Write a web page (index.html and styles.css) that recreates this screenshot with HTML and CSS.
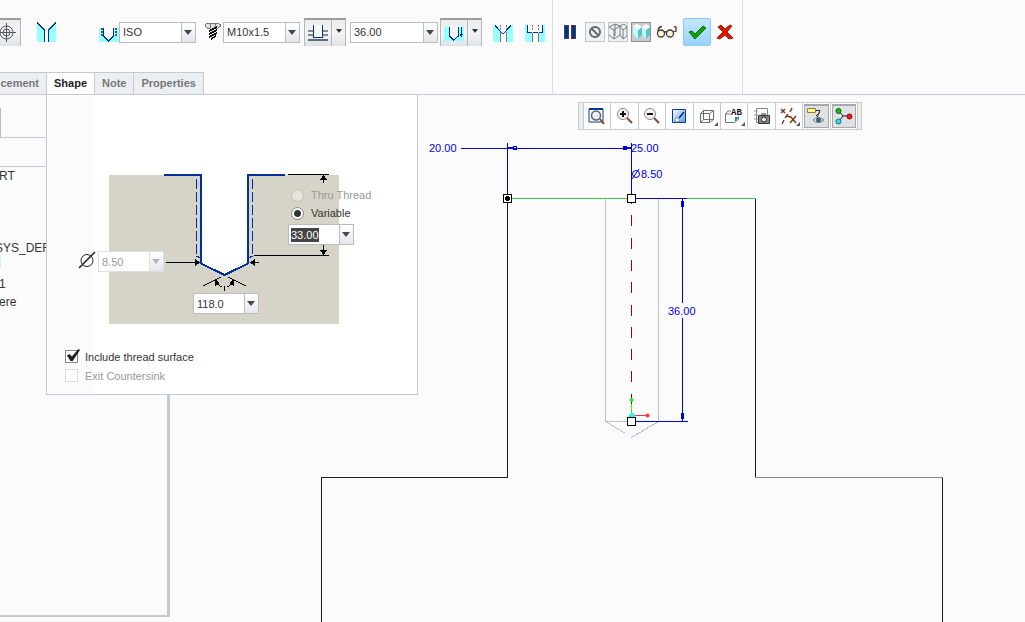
FILE: index.html
```html
<!DOCTYPE html>
<html lang="en">
<head>
<meta charset="utf-8">
<title>Hole</title>
<link rel="stylesheet" href="styles.css">
</head>
<body>
<header class="dashboard">
  <div class="group group-hole">
    <div class="tools">
      <button class="raised target" aria-label="Placement target">
        <svg width="20" height="24" viewBox="0 0 20 24" fill="none" stroke="#55585c"><circle cx="6.500" cy="11.500" r="6.500"/><circle cx="6.500" cy="11.500" r="3.500"/><path d="M6.500 2v19M-3 11.500h19"/></svg>
      </button>
      <button class="icon simple" aria-label="Simple hole">
        <svg width="20" height="20" shape-rendering="crispEdges"><path d="M0 0v20h7V8L1 1zM19 0v20h-8V8l7-7z" fill="#98ffff"/><path d="M0 .5L7.500 8v12M19 .5L11.500 8v12" fill="none" stroke="#00309c"/></svg>
      </button>
      <button class="icon thread" aria-label="Standard hole">
        <svg width="20" height="20" shape-rendering="crispEdges"><path d="M0 6h20v14H0z" fill="#98ffff"/><path d="M5 6h9v8l-4 4-5-4z" fill="#fbfbfb"/><path d="M4.500 6v8l5 5 5-5V6" fill="none" stroke="#00309c"/><path d="M2.500 6v8M16.500 6v8" stroke="#556" stroke-width="2" stroke-dasharray="2 1"/></svg>
      </button>
      <span class="combo"><select aria-label="Thread series"><option>ISO</option></select></span>
      <svg class="screw" width="18" height="20" shape-rendering="crispEdges"><path d="M1.500 2.500l2-1.500h10l2.500 1.500v2L14 6H3L1.500 4.500z" fill="#ddd" stroke="#777"/><path d="M6.500 1v5M11.500 1v5" stroke="#777"/><path d="M6 6h6v8l-3 4-3-4z" fill="#ddd"/><path d="M5 9l8-4M5 12l8-4M5 15l8-4M7 17l5-3" stroke="#111" stroke-width="1.500"/></svg>
      <span class="combo"><select aria-label="Screw size"><option>M10x1.5</option></select></span>
      <div class="raised split split-depth">
        <button aria-label="Drill to depth"><svg width="20" height="20" shape-rendering="crispEdges"><path d="M0 8h5M0 12h5M15 8h5M15 12h5" stroke="#85888c" stroke-width="2"/><path d="M0 17h20" stroke="#666a6e" stroke-width="2"/><path d="M5.500 2v12h9V2" fill="#f6f7f8" stroke="#00309c"/></svg></button>
        <button class="more" aria-label="Depth options"></button>
      </div>
      <span class="combo wide"><input type="text" value="36.00" aria-label="Depth"></span>
      <div class="raised split split-tip">
        <button aria-label="Drill shoulder"><svg width="20" height="20" shape-rendering="crispEdges"><path d="M0 4h20v14H0z" fill="#98ffff"/><path d="M5 4h9v9l-4 4-5-4z" fill="#f2f3f4"/><path d="M5.500 4v9l4 4 5-4V4M17.500 4v9M16 11l1.500 2 1.500-2" fill="none" stroke="#00309c"/></svg></button>
        <button class="more" aria-label="Shoulder options"></button>
      </div>
      <button class="icon sink" aria-label="Add countersink">
        <svg width="20" height="20" shape-rendering="crispEdges"><path d="M0 3h2l5 5v12H0zM20 3h-2l-5 5v12h7z" fill="#98ffff"/><path d="M2 3.500L10 12l8-8.500" fill="none" stroke="#00309c"/><path d="M7.500 10v10M13.500 10v10" stroke="#777"/><path d="M7.500 3v6M13.500 3v6" stroke="#777" stroke-dasharray="2 1"/></svg>
      </button>
      <button class="icon bore" aria-label="Add counterbore">
        <svg width="20" height="20" shape-rendering="crispEdges"><path d="M0 3h2v8h5v9H0zM20 3h-2v8h-5v9h7z" fill="#98ffff"/><path d="M2.500 3v7.500h4M17.500 3v7.500h-4M8 10.500h5" fill="none" stroke="#00309c" stroke-width="1.500"/><path d="M7.500 11v9M13.500 11v9" stroke="#777"/><path d="M7.500 3v6M13.500 3v6" stroke="#777" stroke-dasharray="2 1"/></svg>
      </button>
    </div>
    <nav class="tabs">
      <button class="tab cut">cement</button>
      <button class="tab active">Shape</button>
      <button class="tab">Note</button>
      <button class="tab">Properties</button>
    </nav>
  </div>
  <div class="group group-confirm">
    <button class="icon" aria-label="Pause"><svg width="14" height="16" shape-rendering="crispEdges"><path d="M1 1h4v13H1zM8 1h4v13H8z" fill="#00309c" stroke="#444"/></svg></button>
    <div class="previews">
      <button class="preview" aria-label="No preview"><svg width="18" height="18" fill="none" stroke="#666" stroke-width="2"><circle cx="9" cy="9" r="5"/><path d="M5.500 5.500l7 7"/></svg></button>
      <button class="preview" aria-label="Wireframe preview"><svg width="18" height="18" fill="none" stroke="#77797c"><path d="M0 4l5 3v9L0 12M5 7l6-4v9l-6 4M11 3l3 4v9l-3-4M14 7l4-3v9l-4 3M0 4l6-3 5 2 4-2 3 3M6 1v12"/></svg></button>
      <button class="preview pressed" aria-label="Attached preview"><svg width="18" height="18"><path d="M1 3l5 4v9l-5-5zM10 4l4 3v9l-4-5z" fill="#c4f8f8"/><path d="M6 7l4-3v8l-4 4zM14 7l4-3v8l-4 4z" fill="#58c4c8"/><path d="M1 3l4-2 5 3-4 3zM10 4l4-3 4 3-4 3z" fill="#fff"/></svg></button>
    </div>
    <button class="icon" aria-label="Verify"><svg width="22" height="16" fill="#fff9d8" stroke="#3f3934" stroke-width="1.300"><circle cx="5" cy="9.500" r="3.500"/><circle cx="14" cy="9.500" r="3.500"/><path d="M8 8.500q1.500-1.500 3 0M2 7q0-4 4-4.500M17 8l3-1V3l-2-.5" fill="none"/><path d="M18 2.500l3 1.500" stroke="#d65932"/></svg></button>
    <button class="accept" aria-label="OK"><svg width="20" height="18"><path d="M2 9l3-1 3 3L16 3l3 2L8 16z" fill="#16a00d" stroke="#087000"/></svg></button>
    <button class="icon" aria-label="Cancel"><svg width="18" height="18"><path d="M2 4l3-2 4 4 5-4 2 1-5 6 6 6-4 1-4-4-5 4-3-1 6-6z" fill="#d61800" stroke="#a31a0a"/></svg></button>
  </div>
</header>

<main class="workspace">
  <aside class="tree">
    <div class="tree-tabs"><span class="tree-tab"></span></div>
    <div class="tree-bar"></div>
    <ul class="tree-list">
      <li>RT</li><li></li><li></li><li></li><li class="system">SYS_DEF</li><li><span class="tree-mark"></span></li><li>1</li><li>ere</li>
    </ul>
  </aside>

  <section class="viewport">
    <svg class="drawing" width="100%" height="100%" fill="none" shape-rendering="crispEdges">
      <g transform="translate(-170 -95)">
        <path d="M507.500 198v279.500H321.500V900M755.500 198v279.500M942.500 478v500" stroke="#1a1a1a"/>
        <path d="M755 477.500h188" stroke="#888"/>
        <path d="M508 198.500h248" stroke="#30c850"/>
        <path d="M605.500 199v222.500H631M658.500 199v222.500H631" stroke="#c0c0cc"/>
        <path d="M605.500 421.500l20 12M658.500 421.500l-27 16" stroke="#bcbcc8"/>
        <path d="M631.500 193v218" stroke="#7c0a10" stroke-dasharray="11 11.300"/>
        <path d="M631.500 404v12" stroke="#30f030"/><path d="M632 415.500h15" stroke="#ff3434"/>
        <g shape-rendering="auto"><circle cx="631.500" cy="400" r="2" fill="#20e820"/><circle cx="647.500" cy="415.500" r="2" fill="#ff3434"/><circle cx="632" cy="416" r="3" fill="#30f0f0"/></g>
        <path d="M461 148.500h170M507.500 143v55M631.500 143v52M636 198.500h51M636 421.500h52M682.500 199v104M682.500 318v103" stroke="#0000e6"/>
        <path d="M508 147.500h6M624 147.500h7M513.500 146.500h3v3h-3zM623.500 146.500h3v3h-3z" stroke="#0000e6"/>
        <path d="M681 201h3v6h-3zM681 413h3v6h-3z" fill="#0000e6"/>
        <path d="M503.500 194.500h8v8h-8zM627.500 194.500h8v8h-8zM627.500 417.500h8v8h-8z" fill="#fff" stroke="#000"/>
        <circle cx="507.500" cy="198.500" r="2.500" fill="#000"/>
        <g shape-rendering="auto"><circle cx="636" cy="174" r="3.500" stroke="#0000e6"/><path d="M632 179l7-10" stroke="#0000e6"/></g>
        <g class="dimension"><text x="429" y="152">20.00</text><text x="631" y="152">25.00</text><text x="641" y="178">8.50</text><text x="668" y="315">36.00</text></g>
      </g>
    </svg>

    <div class="view-tools" role="toolbar">
      <span class="grip"></span>
      <button aria-label="Refit"><svg width="20" height="20" fill="none"><path d="M2 3h14v13H2z" fill="#fff" stroke="#0a3b94"/><path d="M2 3h14" stroke="#0a3b94" stroke-width="2"/><circle cx="9" cy="9.500" r="4.500" fill="#e8eef2" stroke="#606468" stroke-width="1.500"/><path d="M13 13l4 5" stroke="#8a4524" stroke-width="2"/></svg></button>
      <button aria-label="Zoom in"><svg width="20" height="20" fill="none"><circle cx="8" cy="8" r="5.500" fill="#f3f3f3" stroke="#888"/><path d="M5 8h6M8 5v6" stroke="#111" stroke-width="2"/><path d="M12 12l5 5" stroke="#8a4524" stroke-width="2"/></svg></button>
      <button aria-label="Zoom out"><svg width="20" height="20" fill="none"><circle cx="8" cy="8" r="5.500" fill="#f3f3f3" stroke="#888"/><path d="M5 8h6" stroke="#111" stroke-width="2"/><path d="M12 12l5 5" stroke="#8a4524" stroke-width="2"/></svg></button>
      <button aria-label="Repaint"><svg width="20" height="20"><defs><linearGradient id="sheet" x2="1" y2="1"><stop stop-color="#fff"/><stop offset="1" stop-color="#4d9cdc"/></linearGradient></defs><path d="M3.500 3.500h13v13h-13z" fill="url(#sheet)" stroke="#0a3b94"/><path d="M15 6l-5 6" stroke="#0a2b74" stroke-width="1.500"/><path d="M7 11l4 4-5 1z" fill="#fff" stroke="#667" stroke-dasharray="1 1"/></svg></button>
      <button class="menu" aria-label="Display style"><svg width="20" height="20" fill="none" stroke="#6c6f72"><path d="M3.500 7.500h9v9h-9zM6.500 4.500h10v9h-10zM3.500 7.500l3-3M12.500 7.500l4-3M12.500 16.500l4-3M3.500 16.500l3-3"/></svg></button>
      <button class="menu" aria-label="Saved orientations"><svg width="20" height="20" fill="none"><path d="M7 5H4L1.500 8v8.500h9l4-3v-3M1.500 8h5" stroke="#777"/><path d="M11 11h4l-4 5z" fill="#0d9aa0"/><text x="7" y="9" class="glyph">AB</text></svg></button>
      <button aria-label="View manager"><svg width="20" height="20" fill="none"><path d="M4.500 2.500h11v14h-11z" fill="#fff" stroke="#888"/><path d="M2 5h4M2 9h4M2 13h4" stroke="#999"/><path d="M6.500 9.500h11v8h-11zM9 8h5" fill="#888b80" stroke="#333"/><circle cx="12" cy="13.500" r="2.500" fill="#eee" stroke="#222"/></svg></button>
      <button class="menu" aria-label="Datum display"><svg width="20" height="20" stroke="#7b3a20" stroke-width="1.500"><path d="M2 3l4 4M6 3L2 7M11 10l6 7M17 10l-6 7M13 2l-2 4M9 8l-3 4M5 14l-2 4M11 11l-3-1"/></svg></button>
      <button class="pressed" aria-label="Annotation display"><svg width="20" height="20" fill="none"><path d="M1.500 2.500h8v4h-8z" fill="#fff7a0" stroke="#99801c"/><path d="M10 4.500h4l-3 7M14 6l-4 4" stroke="#333"/><path d="M7 14q5-5 11 0-6 5-11 0z" fill="#cfe6f4" stroke="#777"/><circle cx="12.500" cy="14" r="2.500" fill="#467"/></svg></button>
      <button class="pressed" aria-label="Spin center"><svg width="20" height="20"><path d="M5 5l4 5h7M9 10l-4 5" fill="none" stroke="#222"/><circle cx="4.500" cy="5" r="2.500" fill="#10c410" stroke="#086008"/><circle cx="4.500" cy="15.500" r="2.500" fill="#30dce4" stroke="#087888"/><circle cx="15.500" cy="10.500" r="2.500" fill="#f01818" stroke="#880808"/></svg></button>
      <span class="grip"></span>
    </div>
  </section>

  <form class="shape-panel">
    <div class="section-view">
      <svg class="section" width="100%" height="250" fill="none" shape-rendering="crispEdges">
        <g transform="translate(-47 -95)">
          <path d="M109 175h230v149H109z" fill="#d6d4c8"/>
          <path d="M201 174h47v90l-24 11-23-11z" fill="#fff"/>
          <path d="M164 175h37v88.500l23.500 11.500 23.500-11.500V175h37" stroke="#00309c" stroke-width="2"/>
          <path d="M196.500 179v78M252.500 179v78" stroke="#00309c" stroke-dasharray="10 3"/>
          <path d="M196.500 256l4 2M252.500 256l-4 2" stroke="#00309c"/>
          <path d="M288 174.500h41M254 255.500h75M323.500 175v8M323.500 245v10M166 262.500h30M253 262.500h6M203 286l18-9M246 286l-18-9M224.500 286v5M215 280l2 4 5 3M234 280l-2 4-5 3" stroke="#000"/>
          <path d="M320 180h7l-3.500-5zM320 250h7l-3.500 5zM195 259v7l5-3.500zM255 259v7l-5-3.500zM215 279v7l5-3zM234 279v7l-5-3z" fill="#000"/>
          <g shape-rendering="auto" stroke="#222"><circle cx="87" cy="260.500" r="6"/><path d="M79 268l16-16" stroke-width="1.500"/></g>
        </g>
      </svg>
      <span class="combo disabled field-diameter"><input type="text" value="8.50" aria-label="Diameter" disabled></span>
      <span class="combo field-angle"><input type="text" value="118.0" aria-label="Tip angle"></span>
      <div class="thread-depth">
        <label class="choice muted"><input type="radio" name="depth" disabled>Thru Thread</label>
        <label class="choice"><input type="radio" name="depth" checked>Variable</label>
        <span class="combo"><input class="selected" type="text" value="33.00" aria-label="Thread depth"></span>
      </div>
    </div>
    <label class="option"><input type="checkbox" checked>Include thread surface</label>
    <label class="option muted"><input type="checkbox" disabled>Exit Countersink</label>
  </form>
</main>
</body>
</html>
```
FILE: styles.css
```css
* { box-sizing: border-box; }

body {
  margin: 0;
  min-height: 100vh;
  display: flex;
  flex-direction: column;
  overflow: hidden;
  background: #fbfbfb;
  color: #333;
  font: 11px/14px "Liberation Sans", Arial, sans-serif;
}

button, input, select { font: inherit; color: inherit; margin: 0; }
button { padding: 0; border: 0; background: none; }
svg { display: block; flex: none; }

/* Dashboard */
.dashboard { display: flex; border-bottom: 1px solid #c6c9cd; }
.group { border-right: 1px solid #dcdfe2; }
.group-hole { flex: none; width: 553px; overflow: hidden; }
.tools { display: flex; align-items: center; height: 64px; margin-bottom: 8px; }
.icon { flex: none; }
.raised {
  display: flex;
  flex: none;
  align-items: center;
  height: 28px;
  border: 1px solid #b4b6b9;
  border-top: 2px solid #9b9da0;
  border-bottom: 0;
  background: linear-gradient(#ececee, #f4f5f6 50%, #dfe2e5);
}
.target { width: 21px; border-left: 0; }
.simple { margin-left: 16px; }
.thread { margin-left: 42px; }
.screw { margin: 0 1px 0 8px; }
.split-depth { margin: 0 4px; }
.split-tip { margin-left: 2px; }
.sink { margin-left: 11px; }
.bore { margin-left: 12px; }
.split { width: 42px; }
.split button { flex: 1; height: 26px; display: flex; justify-content: center; align-items: center; }
.split .more { flex: 0 0 14px; border-left: 1px solid #b4b6b9; align-items: flex-start; padding-top: 9px; }
.more::before {
  content: "";
  border: 3px solid transparent;
  border-top: 4px solid #333;
  border-bottom: 0;
}

.combo {
  display: grid;
  grid-template-columns: 1fr 14px;
  flex: none;
  width: 77px;
  height: 21px;
  border: 1px solid #b9bcc1;
  background: #fff;
}
.combo.wide { width: 88px; }
.combo select, .combo input {
  grid-area: 1 / 1 / 2 / 3;
  width: 100%;
  min-width: 0;
  padding: 0 16px 0 3px;
  border: 0;
  appearance: none;
  background: none;
  outline: 0;
}
.combo::before, .combo::after { content: ""; grid-area: 1 / 2 / 2 / 3; pointer-events: none; }
.combo::before { border-left: 1px solid #b9bcc1; background: linear-gradient(#fff, #e4e7ea); }
.combo::after {
  z-index: 1;
  place-self: center;
  border: 4px solid transparent;
  border-top: 5px solid #44474c;
  border-bottom: 0;
}
.combo.disabled { color: #999; border-color: #dcdfe2; }
.combo.disabled::before { border-color: #dcdfe2; }
.combo.disabled::after { border-top-color: #b4b7bd; }
.combo .selected {
  align-self: center;
  width: 28px;
  height: 14px;
  margin-left: 2px;
  padding: 0;
  background: #444;
  color: #fff;
}

.tabs { display: flex; height: 22px; }
.tab {
  padding: 0 7px 2px;
  border: 1px solid #c6c9cd;
  border-left: 0;
  border-bottom: 0;
  background: #eceff1;
  color: #74777b;
  font-weight: bold;
}
.tab.cut { width: 47px; display: flex; justify-content: flex-end; align-items: center; }
.tab.active { background: #fff; color: #222; }

.group-confirm { display: flex; align-items: flex-start; gap: 5px; width: 190px; padding: 18px 0 0 10px; }
.group-confirm > .icon { height: 28px; }
.previews { display: flex; gap: 3px; margin: 4px 0 0 3px; }
.preview { width: 20px; height: 20px; border: 1px solid #c3c5c8; background: #f0f1f2; }
.preview.pressed { border-color: #8c8f93; background: #c9ccd0; }
.accept {
  display: flex;
  align-items: center;
  justify-content: center;
  width: 28px;
  height: 28px;
  border: 1px solid #92c8f0;
  border-radius: 2px;
  background: linear-gradient(#c4e6ff, #98d2fa);
}

/* Workspace */
.workspace { position: relative; display: flex; flex: 1; }
.tree {
  flex: none;
  width: 170px;
  margin-bottom: 5px;
  border-right: 3px solid #c6c9cd;
  border-bottom: 2px solid #c6c9cd;
}
.tree-tabs { height: 43px; padding-top: 13px; border-bottom: 1px solid #c6c9cd; }
.tree-tab { display: block; width: 1px; height: 29px; background: #b8bbc0; }
.tree-bar { height: 29px; border-bottom: 1px solid #c6c9cd; }
.tree-list { margin: 0; padding: 0; list-style: none; font-size: 12px; line-height: 18px; }
.tree-list li { height: 18px; margin-left: -1px; }
.tree-list .system { margin-left: -5px; }
.tree-mark { display: block; width: 2px; height: 11px; background: #c8f4f8; }

.viewport { position: relative; flex: 1; overflow: hidden; }
.drawing { position: absolute; inset: 0; }
.dimension { fill: #0000e6; }

.view-tools {
  position: absolute;
  left: 408px;
  top: 7px;
  display: flex;
  width: 284px;
  height: 28px;
  border: 1px solid #c9cccf;
  background: #fff;
}
.grip { width: 4px; background: #eceff1; }
.grip:last-child { border-left: 1px solid #c9cccf; }
.view-tools button {
  position: relative;
  flex: 1 1 0;
  display: flex;
  align-items: center;
  justify-content: center;
  border-left: 1px solid #c9cccf;
}
.view-tools .pressed {
  background: #dfe2e5;
  box-shadow: inset 0 0 0 1px #fff, inset 0 0 0 2px #a5a8ac, inset 0 3px #a5a8ac;
}
.menu::after {
  content: "";
  position: absolute;
  right: 2px;
  bottom: 3px;
  border: 2px solid #555;
  border-left-color: transparent;
  border-top-color: transparent;
}
.glyph { fill: #111; font: bold 9px "Liberation Mono", monospace; }

/* Shape panel drops down from its tab */
.shape-panel {
  position: absolute;
  left: 46px;
  top: 0;
  width: 372px;
  padding-bottom: 9px;
  border: 1px solid #c6c9cd;
  border-top: 0;
  background: linear-gradient(90deg, #fbfbfb 46px, #fff 46px);
}
.section-view { position: relative; height: 252px; }
.field-diameter { position: absolute; left: 51px; top: 156px; width: 66px; }
.field-angle { position: absolute; left: 146px; top: 198px; width: 66px; }
.thread-depth { position: absolute; left: 241px; top: 91px; display: flex; flex-direction: column; }
.thread-depth .combo { width: 66px; margin-top: 2px; }
.choice, .option { display: flex; align-items: center; }
.choice { height: 18px; gap: 7px; padding-left: 3px; }
.choice input {
  appearance: none;
  width: 13px;
  height: 13px;
  border: 1px solid #888;
  border-radius: 50%;
  background: #fff;
}
.choice input:checked { background: radial-gradient(#333 3px, #fff 4px); }
.choice input:disabled { border-color: #c0c0b8; background: #e4e3da; }
.muted { color: #999; }
.option { height: 19px; gap: 7px; padding-left: 18px; }
.option input {
  appearance: none;
  width: 13px;
  height: 13px;
  border: 1px solid #888;
  background: #fff;
}
.option input:disabled { border-color: #dcdcdc; }
.option input:checked::before {
  content: "";
  display: block;
  width: 14px;
  height: 12px;
  margin-top: -2px;
  background: #222;
  clip-path: polygon(6% 52%, 28% 44%, 42% 62%, 88% 0, 100% 8%, 48% 100%, 32% 100%);
}
```
